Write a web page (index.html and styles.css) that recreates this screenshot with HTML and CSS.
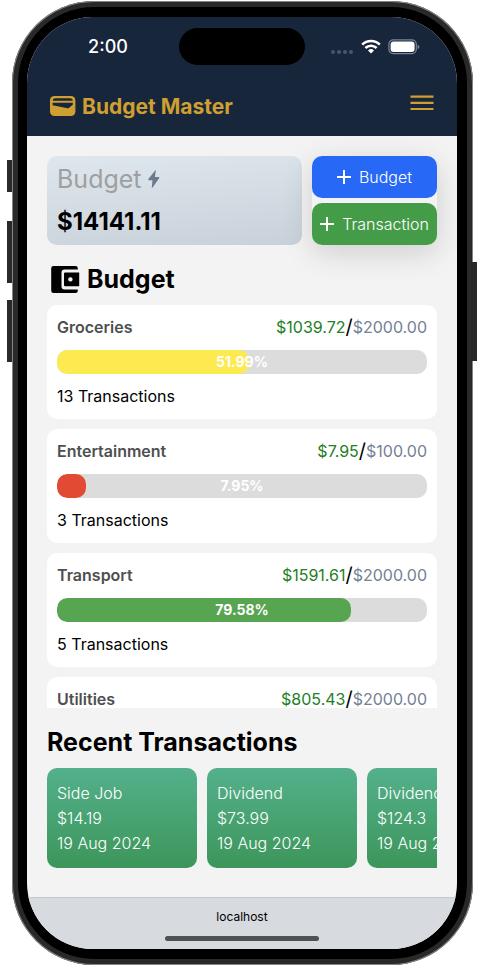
FILE: index.html
```html
<!DOCTYPE html>
<html lang="en">
<head>
<meta charset="utf-8">
<meta name="viewport" content="width=device-width, initial-scale=1">
<title>Budget Master</title>
<link rel="stylesheet" href="styles.css">
</head>
<body>
<div class="device">
  <span class="key key-action"></span>
  <span class="key key-up"></span>
  <span class="key key-down"></span>
  <span class="key key-power"></span>
  <div class="bezel">
  <div class="screen">
    <header class="top">
      <div class="status">
        <span class="time">2:00</span>
        <span class="island"></span>
        <span class="signals">
          <svg width="24" height="6" viewBox="0 0 24 6" fill="#4a566a"><circle cx="3" cy="3" r="2"/><circle cx="9" cy="3" r="2"/><circle cx="15" cy="3" r="2"/><circle cx="21" cy="3" r="2"/></svg>
          <svg class="wifi" width="20" height="15" viewBox="0 0 20 15" fill="none" stroke="#fff" stroke-width="2.6"><path d="M1.2 5.6a12.6 12.6 0 0 1 17.6 0"/><path d="M4.4 9a8 8 0 0 1 11.2 0"/><path d="M10 14.4 7 11.5a4.3 4.3 0 0 1 6 0z" fill="#fff" stroke="none"/></svg>
          <svg width="32" height="16" viewBox="0 0 32 16"><rect x=".9" y=".9" width="27.4" height="13.8" rx="4.4" fill="none" stroke="#7b8595" stroke-width="1.2"/><rect x="2.6" y="2.6" width="24" height="10.4" rx="3" fill="#fff"/><path d="M29.6 5.4q1.8.7 1.8 2.4t-1.8 2.4z" fill="#7b8595"/></svg>
        </span>
      </div>
      <nav class="nav">
        <a class="brand" href="#">
          <svg width="26" height="20" viewBox="0 0 26 20"><rect width="25.4" height="20" rx="4.4" fill="#cf9f31"/><path d="M2.6 4.7q0-2.5 2.4-2.5h15.4q2.4 0 2.4 2.5zM2.6 6.700h20.2v2l-4 3.200a1.600 1.600 0 0 1-1.300.3L2.600 9.200z" fill="#17263b"/></svg>
          <span>Budget Master</span>
        </a>
        <button class="menu" type="button" aria-label="Menu">
          <svg width="24" height="16" viewBox="0 0 24 16" stroke="#cf9f31" stroke-width="2.2"><path d="M.5 1.6h23M.5 7.8h23M.5 14h23"/></svg>
        </button>
      </nav>
    </header>
    <main class="main">
      <section class="summary">
        <div class="balance">
          <div class="balance-label">Budget <svg width="12" height="20" viewBox="0 0 12 20" fill="#6b798c"><path d="M7.8.8Q8.2 0 7.8 1.2L6.9 8h3.8q1 .2.4 1.2L4.6 18.6q-.9.9-.8-.4l.7-7H.9q-1-.1-.5-1.2z"/></svg></div>
          <div class="balance-value">$14141.11</div>
        </div>
        <div class="actions">
          <button class="btn btn-blue" type="button"><svg width="14" height="14" viewBox="0 0 14 14" stroke="#fff" stroke-width="2"><path d="M7 0v14M0 7h14"/></svg>Budget</button>
          <button class="btn btn-green" type="button"><svg width="14" height="14" viewBox="0 0 14 14" stroke="#fff" stroke-width="2"><path d="M7 0v14M0 7h14"/></svg>Transaction</button>
        </div>
      </section>
      <h2 class="title title-budget">
        <svg width="29" height="27" viewBox="0 0 29 27"><path d="M2.5 0h22a2.3 2.3 0 0 1 2.3 2.3V3.5H13.5a3 3 0 0 0-3 3v14a3 3 0 0 0 3 3h13.3v1.2a2.3 2.3 0 0 1-2.3 2.3h-22A2.3 2.3 0 0 1 .2 24.7V2.3A2.3 2.3 0 0 1 2.5 0z"/><path fill-rule="evenodd" d="M14.2 6.4h14v13.8h-14a1.2 1.2 0 0 1-1.2-1.2V7.6a1.2 1.2 0 0 1 1.2-1.2zM19.200 11.200a2 2 0 0 0-2 2v.4a2 2 0 0 0 2 2h.4a2 2 0 0 0 2-2v-.4a2 2 0 0 0-2-2z"/></svg>
        Budget
      </h2>
      <div class="budgets">
        <article class="budget">
          <div class="row"><h3>Groceries</h3><p class="amount"><span class="spent">$1039.72</span><span class="slash">/</span><span class="limit">$2000.00</span></p></div>
          <div class="bar"><div class="fill yellow" style="width:51.99%"></div><span class="pct">51.99%</span></div>
          <p class="count">13 Transactions</p>
        </article>
        <article class="budget">
          <div class="row"><h3>Entertainment</h3><p class="amount"><span class="spent">$7.95</span><span class="slash">/</span><span class="limit">$100.00</span></p></div>
          <div class="bar"><div class="fill red" style="width:7.95%"></div><span class="pct">7.95%</span></div>
          <p class="count">3 Transactions</p>
        </article>
        <article class="budget">
          <div class="row"><h3>Transport</h3><p class="amount"><span class="spent">$1591.61</span><span class="slash">/</span><span class="limit">$2000.00</span></p></div>
          <div class="bar"><div class="fill green" style="width:79.58%"></div><span class="pct">79.58%</span></div>
          <p class="count">5 Transactions</p>
        </article>
        <article class="budget">
          <div class="row"><h3>Utilities</h3><p class="amount"><span class="spent">$805.43</span><span class="slash">/</span><span class="limit">$2000.00</span></p></div>
        </article>
      </div>
      <h2 class="title title-recent">Recent Transactions</h2>
      <div class="recent">
        <article class="tx"><p>Side Job</p><p>$14.19</p><p>19 Aug 2024</p></article>
        <article class="tx"><p>Dividend</p><p>$73.99</p><p>19 Aug 2024</p></article>
        <article class="tx"><p>Dividend</p><p>$124.3</p><p>19 Aug 2024</p></article>
      </div>
    </main>
    <footer class="browser">
      <span class="host">localhost</span>
      <span class="home"></span>
    </footer>
  </div>
  </div>
</div>
</body>
</html>
```

FILE: styles.css
```css
* {
  box-sizing: border-box;
}

body {
  margin: 0;
  padding: 1px 11px 2px 12px;
  background: #fff;
  font-family: Inter, "Liberation Sans", sans-serif;
  font-size: 16px;
  line-height: 25px;
  color: #000;
}

h2,
h3,
p {
  margin: 0;
}

button {
  border: 0;
  padding: 0;
  font: inherit;
  cursor: pointer;
}

svg {
  flex: none;
}

/* Device frame */
.device {
  position: relative;
  height: calc(100vh - 3px);
  padding: 6px;
  border-radius: 82px;
  background: #292929;
  box-shadow: inset 0 0 0 1px #858786;
}

.bezel {
  height: 100%;
  padding: 10px 10px 10px 9px;
  border-radius: 76px;
  background: #000;
}

.key {
  position: absolute;
  left: -5px;
  width: 5px;
  background: #292929;
}

.key-action {
  top: 159px;
  height: 32px;
}

.key-up {
  top: 220px;
  height: 62px;
}

.key-down {
  top: 299px;
  height: 62px;
}

.key-power {
  left: auto;
  right: -4px;
  top: 261px;
  height: 99px;
}

.screen {
  display: flex;
  flex-direction: column;
  height: 100%;
  overflow: hidden;
  border-radius: 66px;
  background: #f3f3f3;
}

/* Header */
.top {
  flex: none;
  background: #17263b;
  color: #fff;
}

.status {
  display: grid;
  grid-template-columns: 1fr 126px 1fr;
  align-items: center;
  height: 59px;
}

.time {
  padding-left: 10px;
  text-align: center;
  font-size: 18px;
  font-weight: 500;
}

.island {
  height: 37px;
  border-radius: 19px;
  background: #000;
}

.signals {
  display: flex;
  align-items: center;
  justify-content: center;
  gap: 7px;
  padding-right: 12px;
}

.signals svg:first-child {
  margin-top: 10px;
}

.nav {
  display: flex;
  align-items: center;
  justify-content: space-between;
  height: 60px;
  padding: 0 23px;
}

.brand {
  display: flex;
  align-items: center;
  gap: 6px;
  color: #cf9f31;
  font-size: 21px;
  font-weight: 700;
  text-decoration: none;
}

.menu {
  display: flex;
  padding-bottom: 6px;
  background: none;
}

/* Content */
.main {
  display: flex;
  flex: 1;
  flex-direction: column;
  min-height: 0;
  padding: 20px 20px 29px;
}

.summary {
  display: flex;
  gap: 10px;
}

.balance {
  display: flex;
  flex: 1;
  flex-direction: column;
  justify-content: space-between;
  padding: 5px 10px;
  border-radius: 10px;
  background: linear-gradient(175deg, #dfe7ee, #c8d0d9);
}

.balance-label {
  display: flex;
  align-items: center;
  gap: 6px;
  font-size: 25px;
  line-height: 36px;
  color: #9f9f9f;
}

.balance-value {
  font-size: 24px;
  line-height: 36px;
  font-weight: 700;
}

.actions {
  display: flex;
  flex-direction: column;
  gap: 5px;
  width: 125px;
  border-radius: 10px;
  box-shadow: 0 8px 30px rgba(0, 0, 0, 0.15);
}

.btn {
  display: flex;
  align-items: center;
  justify-content: center;
  gap: 8px;
  height: 42px;
  border-radius: 10px;
  color: #fff;
  font-weight: 300;
}

.btn-blue {
  background: #2769f6;
}

.btn-green {
  background: #459c48;
}

.title {
  display: flex;
  align-items: center;
  font-size: 25px;
  line-height: 38px;
  font-weight: 700;
}

.title-budget {
  gap: 7px;
  margin: 15px 0 7px;
  padding-left: 4px;
}

.title-recent {
  margin: 15px 0 7px;
}

.budgets {
  display: flex;
  flex: 1;
  flex-direction: column;
  gap: 10px;
  min-height: 0;
  overflow-y: auto;
  scrollbar-width: none;
}

.budget {
  display: flex;
  flex: none;
  flex-direction: column;
  gap: 10px;
  padding: 10px;
  border-radius: 10px;
  background: #fff;
}

.row {
  display: flex;
  justify-content: space-between;
}

.row h3 {
  color: #4f4f4f;
  font-size: 16px;
  font-weight: 600;
}

.amount {
  display: flex;
}

.spent {
  color: #22801f;
}

.slash {
  font-size: 20px;
}

.limit {
  color: #748094;
}

.bar {
  display: grid;
  height: 24px;
  overflow: hidden;
  border-radius: 10px;
  background: #dcdcdc;
}

.fill,
.pct {
  grid-area: 1 / 1;
}

.fill {
  border-radius: 10px;
}

.pct {
  color: #fff;
  font-size: 14px;
  line-height: 24px;
  font-weight: 700;
  text-align: center;
}

.yellow {
  background: #fcea50;
}

.red {
  background: #e24a34;
}

.green {
  background: #58a551;
}

.recent {
  display: flex;
  flex: none;
  gap: 10px;
  overflow-x: auto;
  scrollbar-width: none;
}

.tx {
  display: flex;
  flex: none;
  flex-direction: column;
  justify-content: center;
  width: 150px;
  height: 100px;
  padding: 0 10px;
  border-radius: 10px;
  background: linear-gradient(#54b08c, #3c965a);
  color: #fff;
  font-weight: 300;
}

/* Browser bar */
.browser {
  display: flex;
  flex: none;
  flex-direction: column;
  align-items: center;
  justify-content: space-between;
  height: 52px;
  padding: 6px 0 8px;
  border-top: 1px solid #c6c9cd;
  background: #d7dadf;
}

.host {
  font-size: 12px;
}

.home {
  width: 154px;
  height: 5px;
  border-radius: 3px;
  background: #505153;
}
```
